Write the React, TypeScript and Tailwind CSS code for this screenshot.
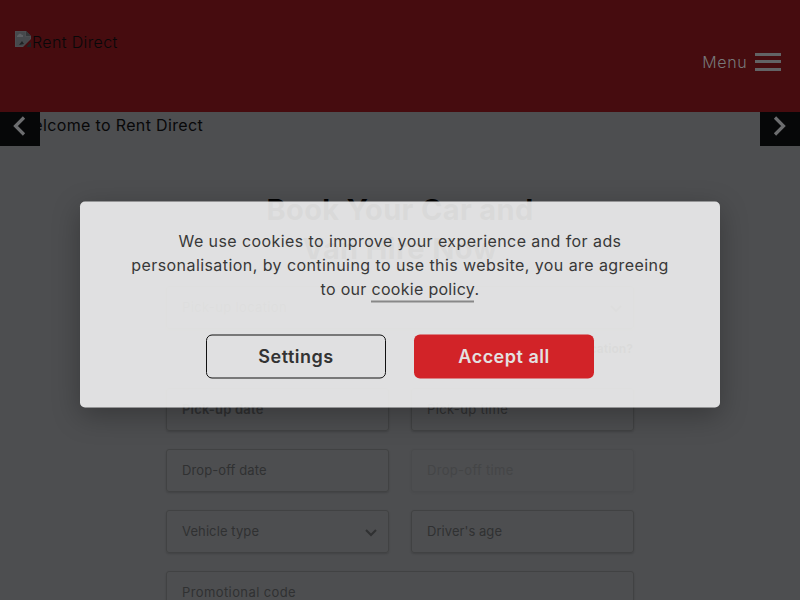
import { ReactNode } from 'react';

function Field({ label, chevron, className = 'tracking-[0.1px]' }: { label: string; chevron?: boolean; className?: string }) {
  return (
    <div
      className={`flex h-[43px] items-center justify-between rounded-[3px] border border-[#414243] pl-[15px] pr-[11px] text-[13px] text-[#303132] shadow-[0_1px_2px_rgba(0,0,0,0.15)] ${className}`}
    >
      <span>{label}</span>
      {chevron && (
        <svg width="12" height="8" viewBox="0 0 12 8" fill="none" stroke="currentColor" strokeWidth="2" className="mt-[3px]">
          <path d="M1 1l5 5 5-5" />
        </svg>
      )}
    </div>
  );
}

function Arrow({ d, className }: { d: string; className: string }) {
  return (
    <button className={`absolute top-0 flex h-[34px] w-10 items-center justify-center bg-[#060708] ${className}`}>
      <svg width="13" height="20" viewBox="0 0 13 20" fill="none" stroke="#6c6d6f" strokeWidth="3.2" className="-mt-[6px]">
        <path d={d} />
      </svg>
    </button>
  );
}

function Line({ children, className }: { children: ReactNode; className: string }) {
  return <span className={`block whitespace-nowrap ${className}`}>{children}</span>;
}

export default function App() {
  return (
    <div className="relative h-[600px] w-[800px] overflow-hidden bg-[#4d4e50] font-['Inter',sans-serif] text-base text-[#080809]">
      <header className="flex h-28 items-start justify-between bg-[#460c0f] pl-[15px] pr-[19px]">
        <div className="mt-[30px] flex items-start">
          <svg width="16" height="16" viewBox="0 0 16 16" className="mt-px">
            <path d="M0 0h11l5 5v3L8 16H0z" fill="#4c4e51" />
            <path d="M1 1h9v5h5v2l-7 7H1z" fill="#46494c" />
            <path d="M11 0v5h5z" fill="#35383a" />
            <path d="M3 4q2-3 4 0h1v2H2V5z" fill="#5c5f62" />
            <path d="M4 14l3-4 2 3zM12 15l4-4v5h-4z" fill="#202324" />
          </svg>
          <span className="pl-px font-light leading-6 tracking-[0.36px]">Rent Direct</span>
        </div>
        <button className="mt-[50px] flex items-center gap-2 leading-6 text-[#77787a]">
          <span className="-mr-[0.5px] font-light tracking-[0.7px]">Menu</span>
          <span className="-mt-px flex h-[18px] w-[26px] flex-col justify-between">
            <i className="h-[3px] bg-[#626365]" />
            <i className="h-[3px] bg-[#626365]" />
            <i className="h-[3px] bg-[#626365]" />
          </span>
        </button>
      </header>

      <section className="relative h-[78px] pl-[18px] pt-[1px]">
        <p className="leading-6 tracking-[0.35px]">Welcome to Rent Direct</p>
        <Arrow d="M11 1.5L2.5 10l8.500 8.500" className="left-0 pr-px" />
        <Arrow d="M2 1.5l8.500 8.500L2 18.500" className="right-0 pr-px" />
      </section>

      <main className="mx-auto w-[468px]">
        <h1 className="text-center text-[29px] font-bold leading-[39px] tracking-[0.35px] text-black">
          <Line className="">Book Your Car and</Line>
          <Line className="">Van Hire Now</Line>
        </h1>
        <form className="mt-[18px]">
          <Field label="Pick-up location" chevron className="tracking-[0.35px]" />
          <p className="flex h-[59px] items-center justify-end pb-5 pr-px text-xs font-bold text-[#111]">Return to a different location?</p>
          <div className="grid grid-cols-2 gap-x-[22px] gap-y-[18px]">
            <Field label="Pick-up date" className="font-semibold tracking-[0.2px]" />
            <Field label="Pick-up time" className="tracking-[0.35px]" />
            <Field label="Drop-off date" />
            <Field label="Drop-off time" className="tracking-[0.3px] opacity-30" />
            <Field label="Vehicle type" chevron />
            <Field label="Driver's age" className="tracking-[0.05px]" />
            <Field label="Promotional code" className="col-span-2 tracking-[0.4px]" />
          </div>
        </form>
      </main>

      <div
        role="dialog"
        className="absolute left-20 top-[201px] h-[206px] w-[640px] translate-y-[0.5px] rounded-[5px] bg-[#f1f1f1]/90 pt-[27px] text-center text-[#383838] shadow-[0_8px_28px_rgba(0,0,0,0.28)]"
      >
        <p className="leading-6">
          <Line className="tracking-[0.42px]">We use cookies to improve your experience and for ads</Line>
          <Line className="tracking-[0.43px]">personalisation, by continuing to use this website, you are agreeing</Line>
          <Line className="tracking-[0.3px]">
            to our <a className="border-b-2 border-[#888] pb-[2px]">cookie policy</a>.
          </Line>
        </p>
        <div className="mt-[34px] flex justify-center gap-7 text-lg font-semibold tracking-[0.5px]">
          <button className="h-11 w-[180px] rounded-[6px] border border-[#111] pb-px text-[#333]">Settings</button>
          <button className="h-11 w-[180px] rounded-[6px] bg-[#d22328] pb-px text-[#e4e1e1]">Accept all</button>
        </div>
      </div>
    </div>
  );
}
